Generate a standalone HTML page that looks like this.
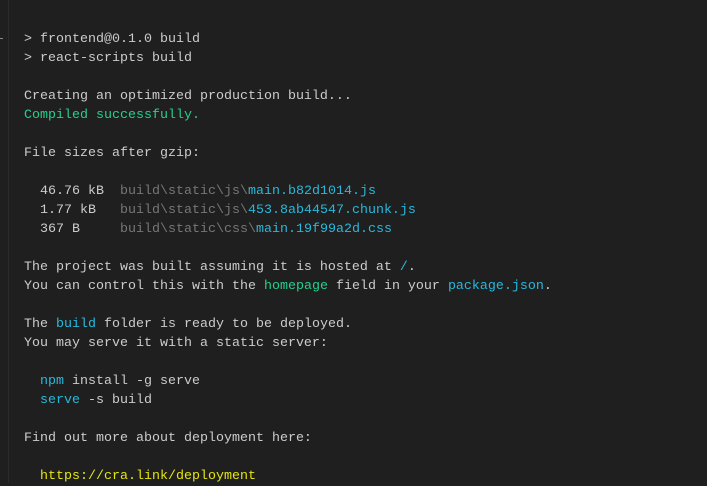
<!DOCTYPE html>
<html><head><meta charset="utf-8"><style>
html,body{margin:0;padding:0;background:#1f1f1f;width:707px;height:483px;overflow:hidden}
.bar{position:absolute;left:0;top:0;width:8px;height:483px;background:#1f1f1f;border-right:1px solid #2b2b2b}
.mk{position:absolute;left:0;top:38px;width:3px;height:1px;background:#888}
pre{position:absolute;left:24px;top:30px;margin:0;font-family:"Liberation Mono",monospace;font-size:13.33px;line-height:19px;color:#cccccc}
.g{color:#23d18b}.c{color:#29b8db}.d{color:#767676}.y{color:#e5e510}
</style></head><body><div class="bar"></div><div class="mk"></div><pre>&gt; frontend@0.1.0 build
&gt; react-scripts build

Creating an optimized production build...
<span class="g">Compiled successfully.</span>

File sizes after gzip:

  46.76 kB  <span class="d">build\static\js\</span><span class="c">main.b82d1014.js</span>
  1.77 kB   <span class="d">build\static\js\</span><span class="c">453.8ab44547.chunk.js</span>
  367 B     <span class="d">build\static\css\</span><span class="c">main.19f99a2d.css</span>

The project was built assuming it is hosted at <span class="c">/</span>.
You can control this with the <span class="g">homepage</span> field in your <span class="c">package.json</span>.

The <span class="c">build</span> folder is ready to be deployed.
You may serve it with a static server:

  <span class="c">npm</span> install -g serve
  <span class="c">serve</span> -s build

Find out more about deployment here:

  <span class="y">https://cra.link/deployment</span>
</pre></body></html>
